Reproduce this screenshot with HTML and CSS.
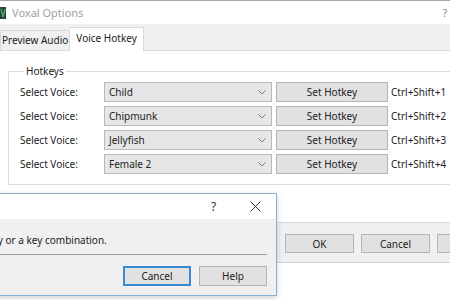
FILE: index.html
```html
<!DOCTYPE html>
<html lang="en">
<head>
    <meta charset="UTF-8" />
    <title>Voxal Options</title>
    <link rel="stylesheet" href="styles.css">
</head>
<body>
    <div class="window">
        <div class="titlebar">
            <svg class="logo" width="6" height="12" viewBox="0 0 6 12">
                <rect width="6" height="12" fill="#1f4a3c" />
                <path d="M1 2 L3 10 L5 2" fill="none" stroke="#5fae7a" stroke-width="1.2" />
            </svg>
            <span class="title">Voxal Options</span>
            <span class="tb-help">?</span>
            <span class="tb-close">&#x2715;</span>
        </div>

        <div class="tabs">
            <div class="tab">Preview Audio</div>
            <div class="tab active">Voice Hotkey</div>
        </div>

        <div class="page">
            <fieldset class="group">
                <legend>Hotkeys</legend>

                <div class="row">
                    <span class="label">Select Voice:</span>
                    <div class="combo"><span>Child</span><svg class="chev" width="8" height="5" viewBox="0 0 8 5"><path d="M0.5 0.5 L4 4 L7.5 0.5" /></svg></div>
                    <button class="btn">Set Hotkey</button>
                    <span class="keys">Ctrl+Shift+1</span>
                </div>
                <div class="row">
                    <span class="label">Select Voice:</span>
                    <div class="combo"><span>Chipmunk</span><svg class="chev" width="8" height="5" viewBox="0 0 8 5"><path d="M0.5 0.5 L4 4 L7.5 0.5" /></svg></div>
                    <button class="btn">Set Hotkey</button>
                    <span class="keys">Ctrl+Shift+2</span>
                </div>
                <div class="row">
                    <span class="label">Select Voice:</span>
                    <div class="combo"><span>Jellyfish</span><svg class="chev" width="8" height="5" viewBox="0 0 8 5"><path d="M0.5 0.5 L4 4 L7.5 0.5" /></svg></div>
                    <button class="btn">Set Hotkey</button>
                    <span class="keys">Ctrl+Shift+3</span>
                </div>
                <div class="row">
                    <span class="label">Select Voice:</span>
                    <div class="combo"><span>Female 2</span><svg class="chev" width="8" height="5" viewBox="0 0 8 5"><path d="M0.5 0.5 L4 4 L7.5 0.5" /></svg></div>
                    <button class="btn">Set Hotkey</button>
                    <span class="keys">Ctrl+Shift+4</span>
                </div>
            </fieldset>
        </div>

        <div class="actions">
            <button class="btn">OK</button>
            <button class="btn">Cancel</button>
            <button class="btn">Apply</button>
        </div>
    </div>

    <!-- hotkey capture dialog, on top of the options window -->
    <div class="dialog">
        <div class="dlg-title">
            <span class="dlg-help">?</span>
            <span class="dlg-close">
                <svg width="11" height="11" viewBox="0 0 11 11"><path d="M0.5 0.5 L10.5 10.5 M10.5 0.5 L0.5 10.5" /></svg>
            </span>
        </div>
        <div class="dlg-body">
            <p class="dlg-text">Press a key or a key combination.</p>
            <div class="dlg-sep"></div>
            <div class="dlg-buttons">
                <button class="btn focused">Cancel</button>
                <button class="btn">Help</button>
            </div>
        </div>
    </div>
</body>
</html>
```

FILE: styles.css
```css
body {
    margin: 0;
    width: 450px;
    height: 300px;
    overflow: hidden;
    position: relative;
    background: #fff;
    font-family: "Noto Sans", "Open Sans", sans-serif;
    font-size: 10px;
    color: #222;
}

.window {
    width: 514px;
    background: #f0f0f0;
    border-bottom: 1px solid #d0d0d0;
}

/* title bar */
.titlebar {
    height: 23px;
    border-top: 1px solid #a9a9a9;
    background: #fff;
    display: flex;
    align-items: center;
}

.logo {
    display: block;
    margin-right: 6px;
}

.title {
    color: #a0a0a0;
    font-size: 11px;
}

.tb-help {
    margin-left: auto;
    width: 46px;
    text-align: center;
    color: #888;
    font-size: 11px;
}

.tb-close {
    width: 46px;
    text-align: center;
    color: #888;
}

/* tabs */
.tabs {
    height: 26px;
    display: flex;
    align-items: flex-end;
}

.tab {
    height: 19px;
    line-height: 19px;
    padding: 0 1px;
    border: 1px solid #d9d9d9;
    border-bottom: none;
    background: #f0f0f0;
}

.tab.active {
    height: 23px;
    line-height: 21px;
    padding: 0 6px;
    background: #fff;
    border-left: none;
    position: relative;
    top: 1px;
}

.page {
    height: 173px;
    padding-top: 13px;
    background: #fff;
    border-top: 1px solid #d9d9d9;
    border-bottom: 1px solid #d9d9d9;
    box-sizing: border-box;
}

/* group box */
.group {
    margin: 0 8px;
    padding: 4px 0 10px 11px;
    border: 1px solid #dcdcdc;
}

.group legend {
    padding: 0 2px;
    margin-left: 4px;
    line-height: 14px;
}

.row {
    display: grid;
    grid-template-columns: 80px 168px 112px auto;
    column-gap: 4px;
    align-items: center;
    margin-bottom: 4px;
}

.row:last-child {
    margin-bottom: 0;
}

.combo {
    height: 20px;
    box-sizing: border-box;
    border: 1px solid #b9b9b9;
    background: #e6e6e6;
    display: flex;
    align-items: center;
    justify-content: space-between;
    padding: 0 5px 0 4px;
}

.chev path {
    fill: none;
    stroke: #777;
    stroke-width: 1;
}

.btn {
    height: 20px;
    box-sizing: border-box;
    border: 1px solid #b5b5b5;
    background: #e1e1e1;
    font: inherit;
    color: #222;
    padding: 0;
}

.keys {
    white-space: nowrap;
    margin-left: -1px;
}

/* bottom buttons */
.actions {
    height: 39px;
    display: flex;
    justify-content: flex-end;
    gap: 7px;
    padding: 11px 8px 0 0;
    box-sizing: border-box;
}

.actions .btn {
    width: 69px;
    height: 19px;
}

/* dialog */
.dialog {
    position: absolute;
    left: -200px;
    top: 193px;
    width: 477px;
    box-sizing: border-box;
    border: 1px solid #86afd6;
    background: #f0f0f0;
    box-shadow: 0 2px 6px rgba(0, 0, 0, 0.18);
}

.dlg-title {
    height: 25px;
    background: #fff;
    display: flex;
    justify-content: flex-end;
    align-items: center;
}

.dlg-help {
    width: 41px;
    text-align: center;
    font-size: 12px;
    color: #333;
}

.dlg-close {
    width: 42px;
    display: flex;
    justify-content: center;
}

.dlg-close path {
    stroke: #333;
    stroke-width: 1;
}

.dlg-body {
    padding: 14px 9px 9px 0;
}

.dlg-text {
    margin: 0 0 6px 150px;
    line-height: 15px;
}

.dlg-sep {
    border-top: 1px solid #a0a0a0;
    margin-left: 10px;
}

.dlg-buttons {
    display: flex;
    justify-content: flex-end;
    gap: 8px;
    margin-top: 11px;
}

.dlg-buttons .btn {
    width: 68px;
}

.btn.focused {
    border: 1px solid #3c8ad6;
    box-shadow: inset 0 0 0 1px #3c8ad6;
}
```
